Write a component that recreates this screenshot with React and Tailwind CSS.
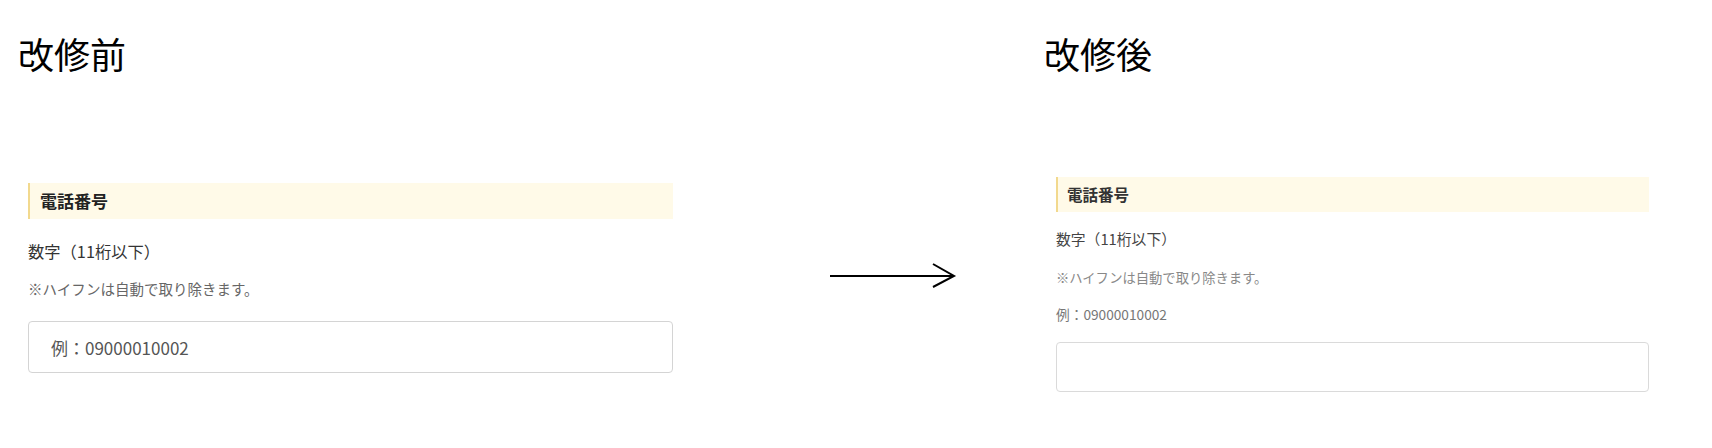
const font = { fontFamily: '"Noto Sans CJK JP", "Noto Sans", sans-serif' };

const Arrow = () => (
  <svg width="130" height="28" viewBox="0 0 130 28" className="shrink-0">
    <path d="M2 14 H126" stroke="#000" strokeWidth="2" fill="none" />
    <path d="M105 2 L126 14 L105 25" stroke="#000" strokeWidth="2" fill="none" />
  </svg>
);

const Before = () => (
  <div className="w-[700px] shrink-0 pl-[18px] pt-[31px]">
    <div className="text-[36px] leading-[44px] text-black">改修前</div>
    <div className="ml-[10px] mt-[108px] w-[645px]">
      <div className="h-[36px] border-l-2 border-[#f2d98e] bg-[#fffae8] flex items-center pl-[10px] text-[17px] font-bold text-[#222]">
        電話番号
      </div>
      <div className="mt-[20px] text-[16.3px] leading-[24px] text-[#333]">数字（11桁以下）</div>
      <div className="mt-[16px] text-[14.5px] leading-[20px] text-[#666]">※ハイフンは自動で取り除きます。</div>
      <input
        readOnly
        placeholder="例：09000010002"
        className="mt-[22px] block w-full h-[52px] border border-[#d4d4d4] rounded-[4px] px-[22px] text-[17px] placeholder:text-[#555] outline-none"
      />
    </div>
  </div>
);

const After = () => (
  <div className="ml-[86px] w-[620px] shrink-0 pt-[31px]">
    <div className="text-[36px] leading-[44px] text-black">改修後</div>
    <div className="ml-[12px] mt-[102px] w-[593px]">
      <div className="h-[35px] border-l-2 border-[#f2d98e] bg-[#fffae8] flex items-center pl-[9px] text-[15.5px] font-bold text-[#333]">
        電話番号
      </div>
      <div className="mt-[16px] text-[14.8px] leading-[22px] text-[#444]">数字（11桁以下）</div>
      <div className="mt-[18px] text-[13.3px] leading-[20px] text-[#888]">※ハイフンは自動で取り除きます。</div>
      <div className="mt-[16px] text-[13.7px] leading-[20px] text-[#777]">例：09000010002</div>
      <input
        readOnly
        className="mt-[18px] block w-full h-[50px] border border-[#dadada] rounded-[4px] outline-none"
      />
    </div>
  </div>
);

export default function App() {
  return (
    <div className="w-[1712px] h-[448px] bg-white flex items-start" style={font}>
      <Before />
      <div className="ml-[128px] mt-[262px]">
        <Arrow />
      </div>
      <After />
    </div>
  );
}
